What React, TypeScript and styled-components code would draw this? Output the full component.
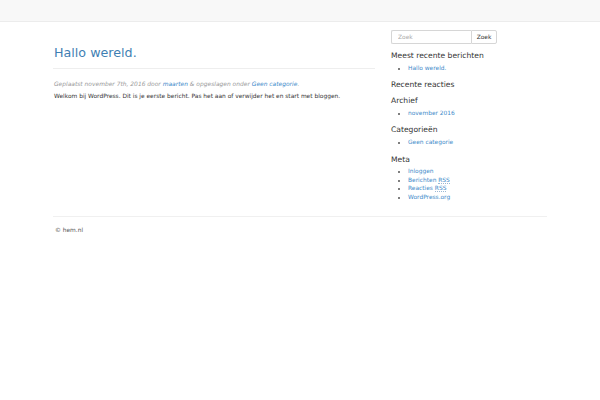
import styled, { createGlobalStyle } from "styled-components";

const GlobalStyle = createGlobalStyle`
  html, body {
    margin: 0;
    padding: 0;
    background: #ffffff;
  }
  body {
    font-family: "DejaVu Sans", Verdana, sans-serif;
    color: #333333;
  }
`;

type Section = {
  title: string;
  items: { label: string; abbr?: string }[];
};

const sections: Section[] = [
  { title: "Meest recente berichten", items: [{ label: "Hallo wereld." }] },
  { title: "Recente reacties", items: [] },
  { title: "Archief", items: [{ label: "november 2016" }] },
  { title: "Categorieën", items: [{ label: "Geen categorie" }] },
  {
    title: "Meta",
    items: [
      { label: "Inloggen" },
      { label: "Berichten ", abbr: "RSS" },
      { label: "Reacties ", abbr: "RSS" },
      { label: "WordPress.org" },
    ],
  },
];

export default function App() {
  return (
    <>
      <GlobalStyle />
      <Navbar />
      <Container>
        <Row>
          <Main>
            <PostTitle>Hallo wereld.</PostTitle>
            <PostMeta>
              Geplaatst november 7th, 2016 door <Link>maarten</Link> &amp; opgeslagen onder{" "}
              <Link>Geen categorie</Link>.
            </PostMeta>
            <PostBody>
              Welkom bij WordPress. Dit is je eerste bericht. Pas het aan of verwijder het en start met bloggen.
            </PostBody>
          </Main>
          <Sidebar>
            <SearchForm>
              <SearchInput placeholder="Zoek" />
              <SearchButton type="button">Zoek</SearchButton>
            </SearchForm>
            {sections.map((section) => (
              <Widget key={section.title}>
                <WidgetTitle>{section.title}</WidgetTitle>
                {section.items.length > 0 && (
                  <WidgetList>
                    {section.items.map((item) => (
                      <li key={item.label + (item.abbr ?? "")}>
                        <Link>
                          {item.label}
                          {item.abbr && <Abbr>{item.abbr}</Abbr>}
                        </Link>
                      </li>
                    ))}
                  </WidgetList>
                )}
              </Widget>
            ))}
          </Sidebar>
        </Row>
        <Footer>© hem.nl</Footer>
      </Container>
    </>
  );
}

const Navbar = styled.header`
  height: 21px;
  background: #f8f8f8;
  border-bottom: 1px solid #ececec;
`;

const Container = styled.div`
  width: 494px;
  margin: 0 auto;
`;

const Row = styled.div`
  display: flex;
  gap: 16px;
`;

const Main = styled.main`
  width: 322px;
  flex: 0 0 322px;
`;

const PostTitle = styled.h1`
  margin: 23px 0 0;
  padding: 0 0 7px 1px;
  border-bottom: 1px solid #eeeeee;
  color: #3f7fb3;
  font-size: 12.7px;
  font-weight: 400;
  line-height: 16px;
`;

const PostMeta = styled.p`
  margin: 9.5px 0 0 1px;
  color: #9a9a9a;
  font-size: 5.95px;
  font-style: italic;
  line-height: 9px;
`;

const PostBody = styled.p`
  margin: 4px 0 0 1px;
  color: #333333;
  font-size: 5.9px;
  line-height: 9px;
`;

const Link = styled.a`
  color: #428bca;
  text-decoration: none;
`;

const Abbr = styled.abbr`
  text-decoration: none;
  border-bottom: 1px dotted #9bb8d4;
`;

const Sidebar = styled.aside`
  flex: 1;
  display: flex;
  flex-direction: column;
  padding-top: 8px;
`;

const SearchForm = styled.div`
  display: flex;
  width: 106px;
  height: 14px;
  margin-bottom: 7px;
`;

const SearchInput = styled.input`
  box-sizing: border-box;
  width: 80px;
  height: 14px;
  margin: 0;
  padding: 0 0 0 6px;
  border: 1px solid #d6d6d6;
  border-right: 0;
  border-radius: 2px 0 0 2px;
  font-family: inherit;
  font-size: 5.9px;
  color: #555555;
  outline: none;

  &::placeholder {
    color: #aaaaaa;
  }
`;

const SearchButton = styled.button`
  box-sizing: border-box;
  width: 27px;
  height: 14px;
  margin: 0;
  padding: 0;
  border: 1px solid #d6d6d6;
  border-radius: 0 2px 2px 0;
  background: #ffffff;
  color: #333333;
  font-family: inherit;
  font-size: 5.9px;
`;

const Widget = styled.section`
  margin-bottom: 3.5px;
`;

const WidgetTitle = styled.h3`
  margin: 0 0 2.75px;
  color: #333333;
  font-size: 7.6px;
  font-weight: 500;
  line-height: 10px;
`;

const WidgetList = styled.ul`
  margin: 0 0 4.25px;
  padding-left: 17px;
  font-size: 5.9px;
  line-height: 8.6px;
  color: #555555;
`;

const Footer = styled.footer`
  margin-top: 7px;
  padding-top: 9px;
  border-top: 1px solid #f0f0f0;
  color: #555555;
  font-size: 5.9px;
  line-height: 9px;
  padding-left: 2px;
`;
